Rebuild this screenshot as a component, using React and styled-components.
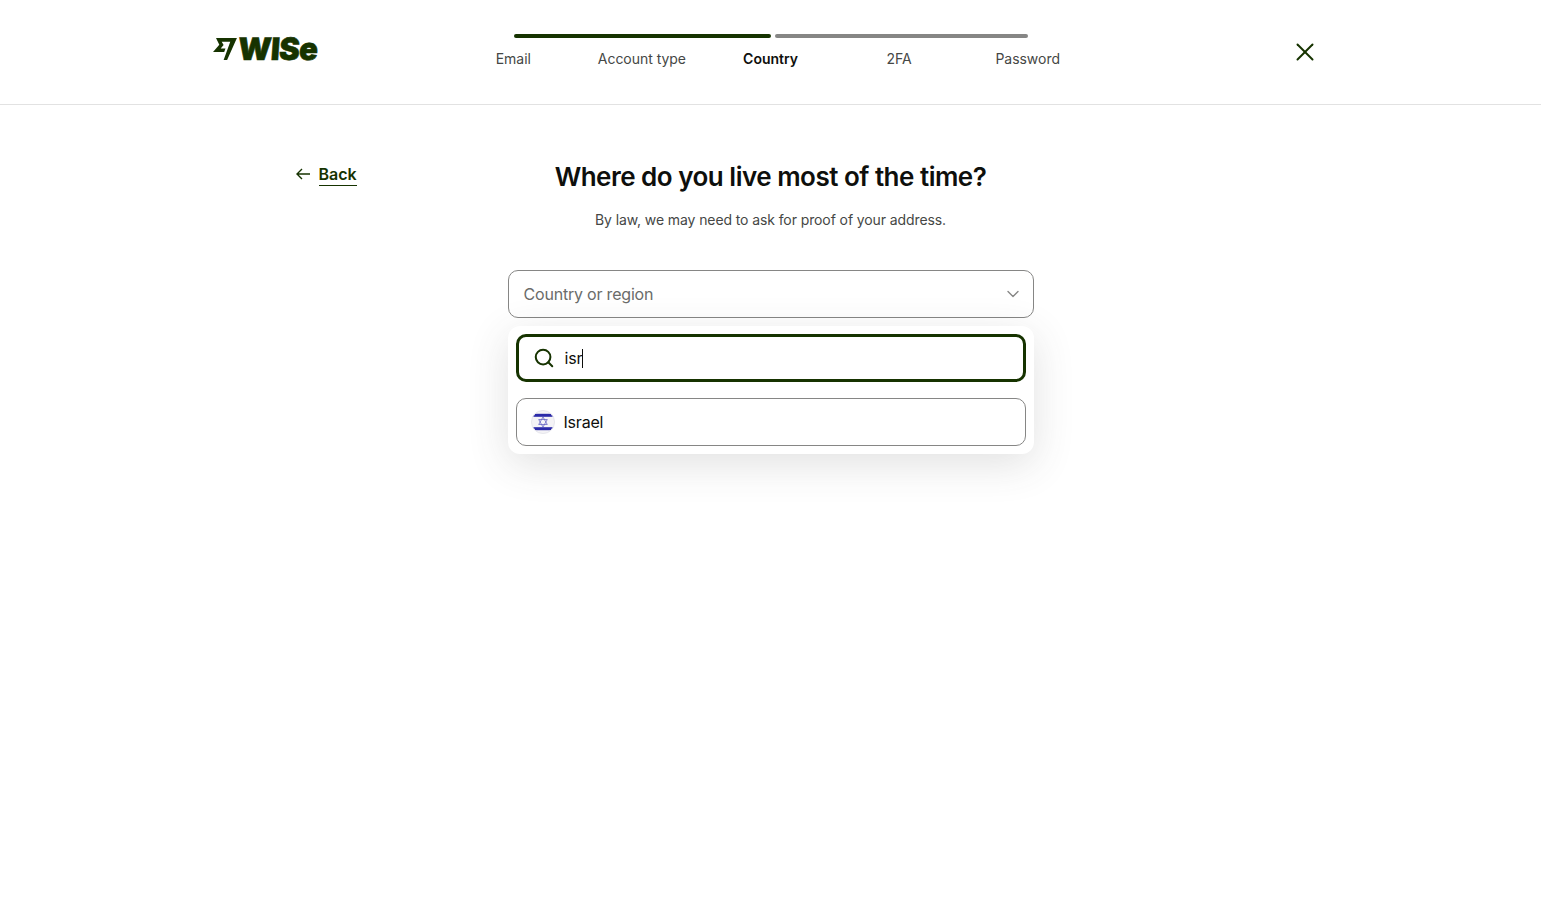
import styled, { createGlobalStyle } from "styled-components";
import { ChevronDown, Search, X } from "lucide-react";

const GlobalStyle = createGlobalStyle`
  * {
    box-sizing: border-box;
  }
  html, body {
    margin: 0;
    background: #fff;
    font-family: Inter, "Liberation Sans", sans-serif;
    color: #0e0f0c;
  }
  #root {
    min-height: 100vh;
  }
`;

const FOREST = "#163300";

const steps = [
  { label: "Email" },
  { label: "Account type" },
  { label: "Country", active: true },
  { label: "2FA" },
  { label: "Password" },
];

const Header = styled.header`
  height: 105px;
  border-bottom: 1px solid #e2e2e2;
  display: flex;
  justify-content: center;
`;

const HeaderInner = styled.div`
  width: 1115px;
  display: grid;
  grid-template-columns: 1fr 643px 1fr;
`;

const Logo = styled.div`
  display: flex;
  align-items: center;
  height: 97px;
  gap: 1px;
  color: ${FOREST};
`;

const LogoMark = styled.svg`
  width: 24px;
  height: 22px;
  flex: none;
`;

const LogoText = styled.span`
  font-size: 31px;
  font-weight: 900;
  line-height: 1;
  letter-spacing: -0.6px;
  transform: skewX(-4deg);
  -webkit-text-stroke: 0.6px ${FOREST};
`;

const Stepper = styled.nav`
  padding-top: 34px;
`;

const Track = styled.div`
  display: flex;
  gap: 4px;
  margin: 0 64px 0 65px;
`;

const Segment = styled.div`
  height: 4px;
  border-radius: 2px;
  width: ${(p) => p.$width}px;
  background: ${(p) => (p.$done ? FOREST : "#868685")};
`;

const Labels = styled.ol`
  list-style: none;
  margin: 10px 0 0;
  padding: 0;
  display: grid;
  grid-template-columns: repeat(5, 128.6px);
`;

const StepLabel = styled.li`
  text-align: center;
  font-size: 14px;
  line-height: 22px;
  letter-spacing: -0.03px;
  font-weight: ${(p) => (p.$active ? 600 : 400)};
  color: ${(p) => (p.$active ? "#0e0f0c" : "#454745")};
`;

const CloseButton = styled.button`
  justify-self: end;
  align-self: start;
  margin: 37px 8px 0 0;
  padding: 0;
  border: 0;
  background: none;
  width: 30px;
  height: 30px;
  color: ${FOREST};
  display: flex;
`;

const Main = styled.main`
  width: 950px;
  margin: 0 auto;
  padding-top: 55px;
  display: grid;
  grid-template-columns: 212px 526px 212px;
`;

const BackLink = styled.a`
  align-self: start;
  justify-self: start;
  display: flex;
  align-items: center;
  gap: 9px;
  height: 30px;
  color: ${FOREST};
  font-size: 16px;
  font-weight: 600;
`;

const BackArrow = styled.svg`
  width: 14px;
  height: 12px;
  flex: none;
  margin-bottom: 2px;
`;

const BackText = styled.span`
  line-height: 21px;
  border-bottom: 1px solid ${FOREST};
`;

const Content = styled.div`
  display: flex;
  flex-direction: column;
  align-items: stretch;
`;

const Title = styled.h1`
  margin: 0;
  text-align: center;
  font-size: 26px;
  line-height: 34px;
  font-weight: 600;
  letter-spacing: -0.5px;
  color: #0e0f0c;
`;

const Subtitle = styled.p`
  margin: 15px 0 0;
  text-align: center;
  font-size: 14px;
  line-height: 22px;
  letter-spacing: -0.1px;
  color: #454745;
`;

const SelectWrap = styled.div`
  position: relative;
  margin-top: 39px;
`;

const SelectBox = styled.div`
  height: 48px;
  border: 1px solid #868685;
  border-radius: 10px;
  padding: 0 10px 0 15px;
  display: flex;
  align-items: center;
  justify-content: space-between;
  font-size: 16px;
  letter-spacing: -0.2px;
  color: #6a6c6a;
`;

const Panel = styled.div`
  position: absolute;
  top: 56px;
  left: 0;
  right: 0;
  padding: 8px;
  background: #fff;
  border-radius: 12px;
  box-shadow: 0 10px 40px rgba(69, 71, 69, 0.16);
  display: flex;
  flex-direction: column;
  gap: 16px;
`;

const SearchBox = styled.div`
  height: 48px;
  border: 3px solid ${FOREST};
  border-radius: 10px;
  padding: 0 0 0 14px;
  display: flex;
  align-items: center;
  gap: 10px;
  font-size: 16px;
  color: ${FOREST};
`;

const SearchValue = styled.span`
  color: #0e0f0c;
  display: flex;
  align-items: center;
  letter-spacing: -0.2px;
`;

const Caret = styled.i`
  display: block;
  width: 1px;
  height: 19px;
  background: #0e0f0c;
`;

const Option = styled.div`
  height: 48px;
  border: 1px solid #868685;
  border-radius: 10px;
  padding: 0 14px;
  display: flex;
  align-items: center;
  gap: 9px;
  font-size: 16px;
  letter-spacing: -0.2px;
  color: #0e0f0c;
`;

const Flag = styled.svg`
  width: 24px;
  height: 24px;
  flex: none;
`;

const IsraelFlag = () => (
  <Flag viewBox="0 0 24 24">
    <defs>
      <clipPath id="flag-circle">
        <circle cx="12" cy="12" r="11.5" />
      </clipPath>
    </defs>
    <g clipPath="url(#flag-circle)">
      <rect width="24" height="24" fill="#f4f3f6" />
      <rect y="3.8" width="24" height="3" fill="#2b2aa8" />
      <rect y="17.2" width="24" height="3" fill="#2b2aa8" />
    </g>
    <circle cx="12" cy="12" r="11.5" fill="none" stroke="#e6e6ec" />
    <path d="M12 7l4.3 7.5H7.7zM12 17L7.7 9.5h8.6z" fill="none" stroke="#6a68c4" strokeWidth="0.8" />
  </Flag>
);

export default function App() {
  return (
    <>
      <GlobalStyle />
      <Header>
        <HeaderInner>
          <Logo>
            <LogoMark viewBox="0 0 26.1 24">
              <path
                d="M6.826 7.232 0 15.21h12.188l1.37-3.762H8.335l3.191-3.69.01-.098-2.075-3.572h9.335l-7.237 19.912h3.783L26.06 0H3.244z"
                fill="currentColor"
              />
            </LogoMark>
            <LogoText>WISe</LogoText>
          </Logo>
          <Stepper>
            <Track>
              <Segment $done $width={257} />
              <Segment $width={253} />
            </Track>
            <Labels>
              {steps.map((s) => (
                <StepLabel key={s.label} $active={s.active}>
                  {s.label}
                </StepLabel>
              ))}
            </Labels>
          </Stepper>
          <CloseButton aria-label="Close">
            <X size={30} strokeWidth={1.6} />
          </CloseButton>
        </HeaderInner>
      </Header>
      <Main>
        <BackLink>
          <BackArrow viewBox="0 0 14 12" fill="none" stroke="currentColor" strokeWidth="1.4">
            <path d="M14 6H1.2M6 1 1 6l5 5" />
          </BackArrow>
          <BackText>Back</BackText>
        </BackLink>
        <Content>
          <Title>Where do you live most of the time?</Title>
          <Subtitle>By law, we may need to ask for proof of your address.</Subtitle>
          <SelectWrap>
            <SelectBox>
              Country or region
              <ChevronDown size={20} strokeWidth={1.6} color="#868685" />
            </SelectBox>
            <Panel>
              <SearchBox>
                <Search size={22} strokeWidth={2.2} />
                <SearchValue>
                  isr
                  <Caret />
                </SearchValue>
              </SearchBox>
              <Option>
                <IsraelFlag />
                Israel
              </Option>
            </Panel>
          </SelectWrap>
        </Content>
      </Main>
    </>
  );
}
